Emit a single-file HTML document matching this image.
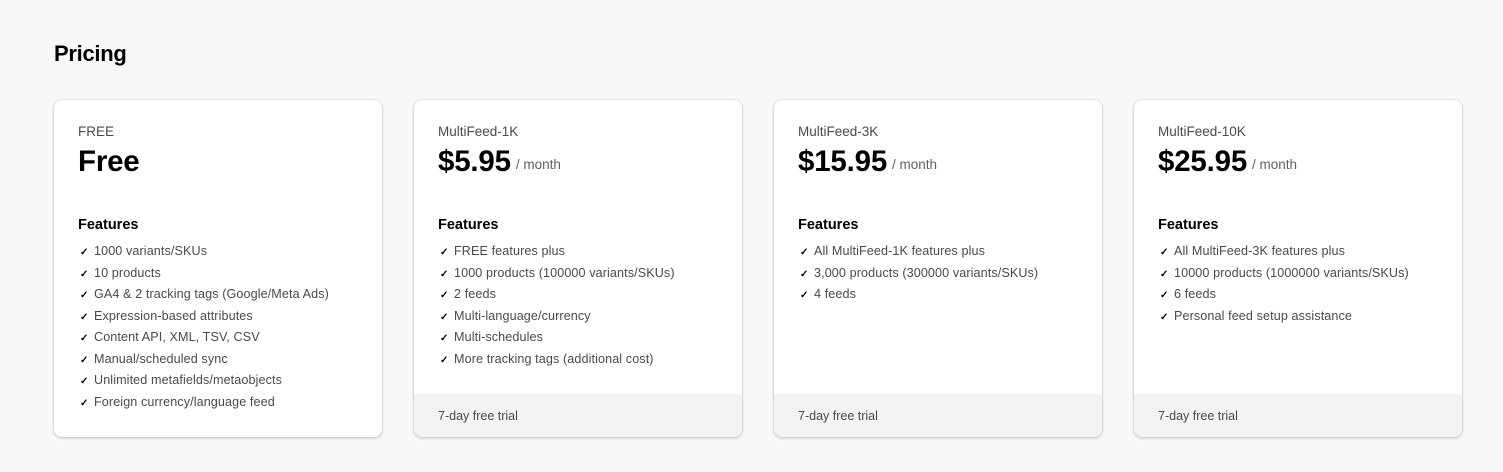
<!DOCTYPE html>
<html><head><style>
*{margin:0;padding:0;box-sizing:border-box}
body{width:1503px;height:472px;background:#f8f8f7;font-family:"Liberation Sans",sans-serif;color:#000;position:relative;overflow:hidden}
h1{position:absolute;left:54px;top:41px;font-size:22px;font-weight:bold;letter-spacing:-0.3px}
.card{position:absolute;top:100px;width:328px;height:337px;background:#fff;border-radius:8px;box-shadow:0 1px 3px rgba(0,0,0,.22),0 0 0 1px rgba(0,0,0,.03);overflow:hidden}
.name{position:absolute;left:24px;top:24px;font-size:13.5px;color:#4a4a4a}
.price{position:absolute;left:24px;top:45px;font-size:29.5px;font-weight:bold;letter-spacing:-0.2px}
.price span{font-size:13.5px;font-weight:normal;color:#616161;letter-spacing:0;margin-left:-3px;position:relative;top:-2px}
.feat{position:absolute;left:24px;top:117px;font-size:14.5px;font-weight:bold}
ul{position:absolute;left:24px;top:143px;list-style:none}
li{font-size:12.6px;color:#4a4a4a;height:21.5px;line-height:17px;white-space:nowrap;letter-spacing:0.1px}
li:before{content:"✓";display:inline-block;width:16px;padding-left:2px;font-size:10px;color:#000;font-weight:bold;margin-right:-2px}
.foot{position:absolute;left:0;bottom:0;width:100%;height:43px;background:#f3f3f2;font-size:12.5px;color:#4a4a4a;padding:15px 24px 0}
</style></head><body>
<h1>Pricing</h1>
<div class="card" style="left:54px">
<div class="name">FREE</div><div class="price">Free</div>
<div class="feat">Features</div>
<ul><li>1000 variants/SKUs</li><li>10 products</li><li>GA4 &amp; 2 tracking tags (Google/Meta Ads)</li><li>Expression-based attributes</li><li>Content API, XML, TSV, CSV</li><li>Manual/scheduled sync</li><li>Unlimited metafields/metaobjects</li><li>Foreign currency/language feed</li></ul>
</div>
<div class="card" style="left:414px">
<div class="name">MultiFeed-1K</div><div class="price">$5.95 <span>/ month</span></div>
<div class="feat">Features</div>
<ul><li>FREE features plus</li><li>1000 products (100000 variants/SKUs)</li><li>2 feeds</li><li>Multi-language/currency</li><li>Multi-schedules</li><li>More tracking tags (additional cost)</li></ul>
<div class="foot">7-day free trial</div>
</div>
<div class="card" style="left:774px">
<div class="name">MultiFeed-3K</div><div class="price">$15.95 <span>/ month</span></div>
<div class="feat">Features</div>
<ul><li>All MultiFeed-1K features plus</li><li>3,000 products (300000 variants/SKUs)</li><li>4 feeds</li></ul>
<div class="foot">7-day free trial</div>
</div>
<div class="card" style="left:1134px">
<div class="name">MultiFeed-10K</div><div class="price">$25.95 <span>/ month</span></div>
<div class="feat">Features</div>
<ul><li>All MultiFeed-3K features plus</li><li>10000 products (1000000 variants/SKUs)</li><li>6 feeds</li><li>Personal feed setup assistance</li></ul>
<div class="foot">7-day free trial</div>
</div>
</body></html>
